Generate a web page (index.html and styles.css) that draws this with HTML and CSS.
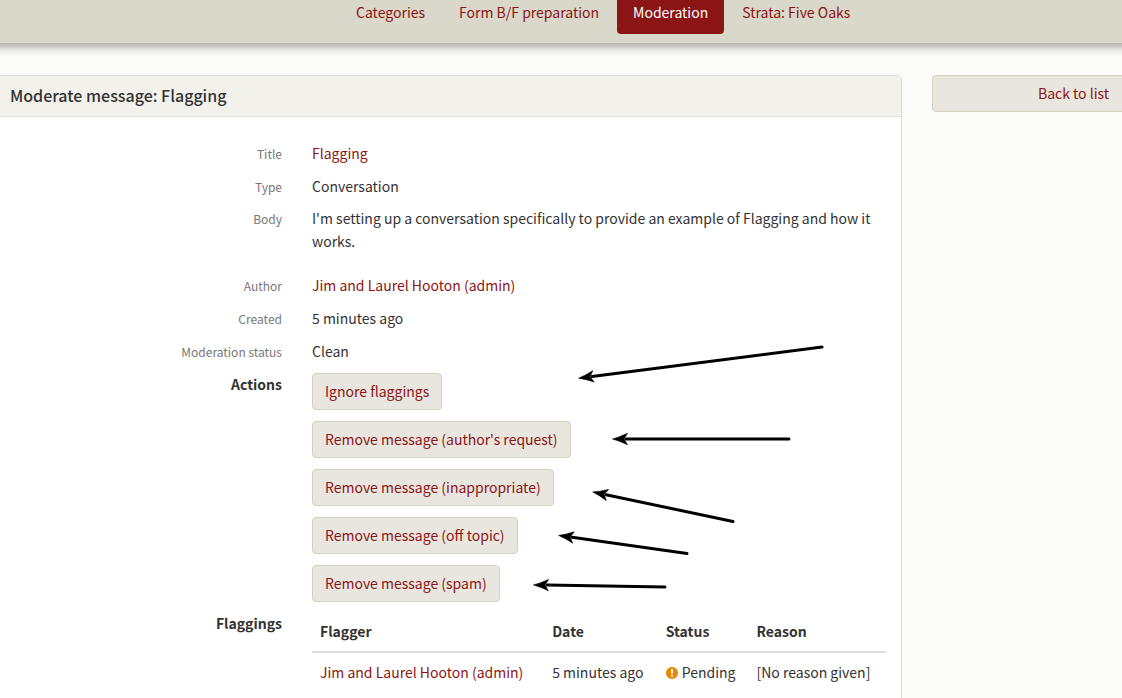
FILE: index.html
```html
<!DOCTYPE html>
<html lang="en">
<head>
<meta charset="utf-8">
<meta name="viewport" content="width=device-width, initial-scale=1">
<title>Moderate message: Flagging</title>
<link rel="stylesheet" href="styles.css">
</head>
<body>
<header class="site-header">
  <nav class="nav" aria-label="Main">
    <a class="nav-link" href="#">Categories</a>
    <a class="nav-link" href="#">Form B/F preparation</a>
    <a class="nav-link active" href="#" aria-current="page">Moderation</a>
    <a class="nav-link" href="#">Strata: Five Oaks</a>
  </nav>
</header>
<div class="layout">
  <main class="panel">
    <h1 class="panel-title">Moderate message: Flagging</h1>
    <dl class="details">
      <div class="row"><dt class="label">Title</dt><dd class="value"><a class="link" href="#">Flagging</a></dd></div>
      <div class="row"><dt class="label">Type</dt><dd class="value">Conversation</dd></div>
      <div class="row row-body"><dt class="label">Body</dt><dd class="value">I'm setting up a conversation specifically to provide an example of Flagging and how it works.</dd></div>
      <div class="row"><dt class="label">Author</dt><dd class="value"><a class="link" href="#">Jim and Laurel Hooton (admin)</a></dd></div>
      <div class="row"><dt class="label">Created</dt><dd class="value">5 minutes ago</dd></div>
      <div class="row"><dt class="label">Moderation status</dt><dd class="value">Clean</dd></div>
      <div class="row">
        <dt class="label strong">Actions</dt>
        <dd class="value actions">
          <button class="btn" type="button">Ignore flaggings</button>
          <button class="btn" type="button">Remove message (author's request)</button>
          <button class="btn" type="button">Remove message (inappropriate)</button>
          <button class="btn" type="button">Remove message (off topic)</button>
          <button class="btn" type="button">Remove message (spam)</button>
          <svg class="arrows" width="540" height="260" viewBox="312 340 540 260" aria-hidden="true">
            <defs>
              <marker id="head" markerUnits="userSpaceOnUse" markerWidth="16" markerHeight="14" viewBox="0 0 16 14" refX="2" refY="7" orient="auto">
                <path d="M15.500 7Q8 5 .5 1.300L4 7L.5 12.700Q8 9 15.500 7Z" stroke="#000" stroke-width=".6"/>
              </marker>
            </defs>
            <g class="shafts">
              <path d="M822 347L592 376.500" marker-end="url(#head)"/>
              <path d="M789 439H626" marker-end="url(#head)"/>
              <path d="M733 521.500L606 494.700" marker-end="url(#head)"/>
              <path d="M687 553.500L572 537.300" marker-end="url(#head)"/>
              <path d="M665 587L547 585.100" marker-end="url(#head)"/>
            </g>
          </svg>
        </dd>
      </div>
      <div class="row">
        <dt class="label strong">Flaggings</dt>
        <dd class="value">
          <table class="flags">
            <thead><tr><th>Flagger</th><th>Date</th><th>Status</th><th>Reason</th></tr></thead>
            <tbody><tr>
              <td><a class="link" href="#">Jim and Laurel Hooton (admin)</a></td>
              <td>5 minutes ago</td>
              <td><span class="status"><svg class="status-icon" width="12" height="12" viewBox="0 0 12 12" aria-hidden="true"><circle cx="6" cy="6" r="6" fill="#ec8500"/><path d="M5 2h2l-.2 5H5.200zM5.100 8h1.800v1.800H5.100z" fill="#fff"/></svg>Pending</span></td>
              <td>[No reason given]</td>
            </tr></tbody>
          </table>
        </dd>
      </div>
    </dl>
  </main>
  <aside class="sidebar"><a class="btn btn-wide" href="#">Back to list</a></aside>
</div>
</body>
</html>
```
FILE: styles.css
```css
* { box-sizing: border-box; }
body {
  margin: 0;
  min-height: 100vh;
  overflow: hidden;
  background: #fbfbf9;
  color: #333;
  font-family: "Noto Sans CJK SC", "Noto Sans", sans-serif;
  font-size: 14px;
  line-height: 23px;
}
.site-header {
  background: #dad8ca;
  box-shadow: 0 2px 10px 1px rgba(0, 0, 0, 0.4), -12px 2px 10px -12px transparent;
  margin: 0 -12px;
  padding: 0 12px 9px;
}
.nav {
  display: flex;
  gap: 2px;
  padding-left: 340px;
}
.nav-link {
  padding: 1px 16px 10px;
  border-radius: 0 0 4px 4px;
  color: #8b1515;
  text-decoration: none;
}
.nav-link.active { background: #8b1515; color: #fff; }
.layout {
  display: flex;
  align-items: flex-start;
  gap: 30px;
  margin: 32px -93px 0 -6px;
}
.panel {
  flex: 1;
  min-height: 640px;
  background: #fff;
  border: 1px solid #ddd;
  border-radius: 4px;
}
.panel-title {
  margin: 0;
  padding: 8px 15px 10px;
  background: #f2f1ec;
  border-bottom: 1px solid #ddd;
  font-size: 16px;
  line-height: 22px;
  font-weight: 500;
}
.details { margin: 0; padding: 20px 15px 20px 0; }
.row {
  display: grid;
  grid-template-columns: 287px 1fr;
  gap: 30px;
  padding: 5px 0;
}
.row-body { padding: 4px 0 16px; }
.label { text-align: right; color: #777; font-size: 12px; }
.strong { color: #333; font-size: 14px; font-weight: 700; }
.value { margin: 0; }
.link { color: #8b1515; text-decoration: none; }
.actions {
  position: relative;
  display: flex;
  flex-direction: column;
  align-items: flex-start;
  gap: 11px;
}
.btn {
  padding: 6px 12px;
  border: 1px solid #d5d0c0;
  border-radius: 4px;
  background: #e9e6df;
  color: #8b1515;
  font: inherit;
  text-align: center;
  text-decoration: none;
}
.btn-wide { display: block; }
.sidebar { flex: 0 0 283px; }
.arrows { position: absolute; left: 0; top: -33px; pointer-events: none; }
.shafts { fill: none; stroke: #000; stroke-width: 3; stroke-linecap: round; }
.arrows marker path { fill: #000; }
.flags { width: 100%; border-collapse: collapse; }
.flags th { padding: 8px; border-bottom: 2px solid #ddd; text-align: left; }
.flags td { padding: 8px; white-space: nowrap; }
.status { display: flex; align-items: center; gap: 4px; }
```
